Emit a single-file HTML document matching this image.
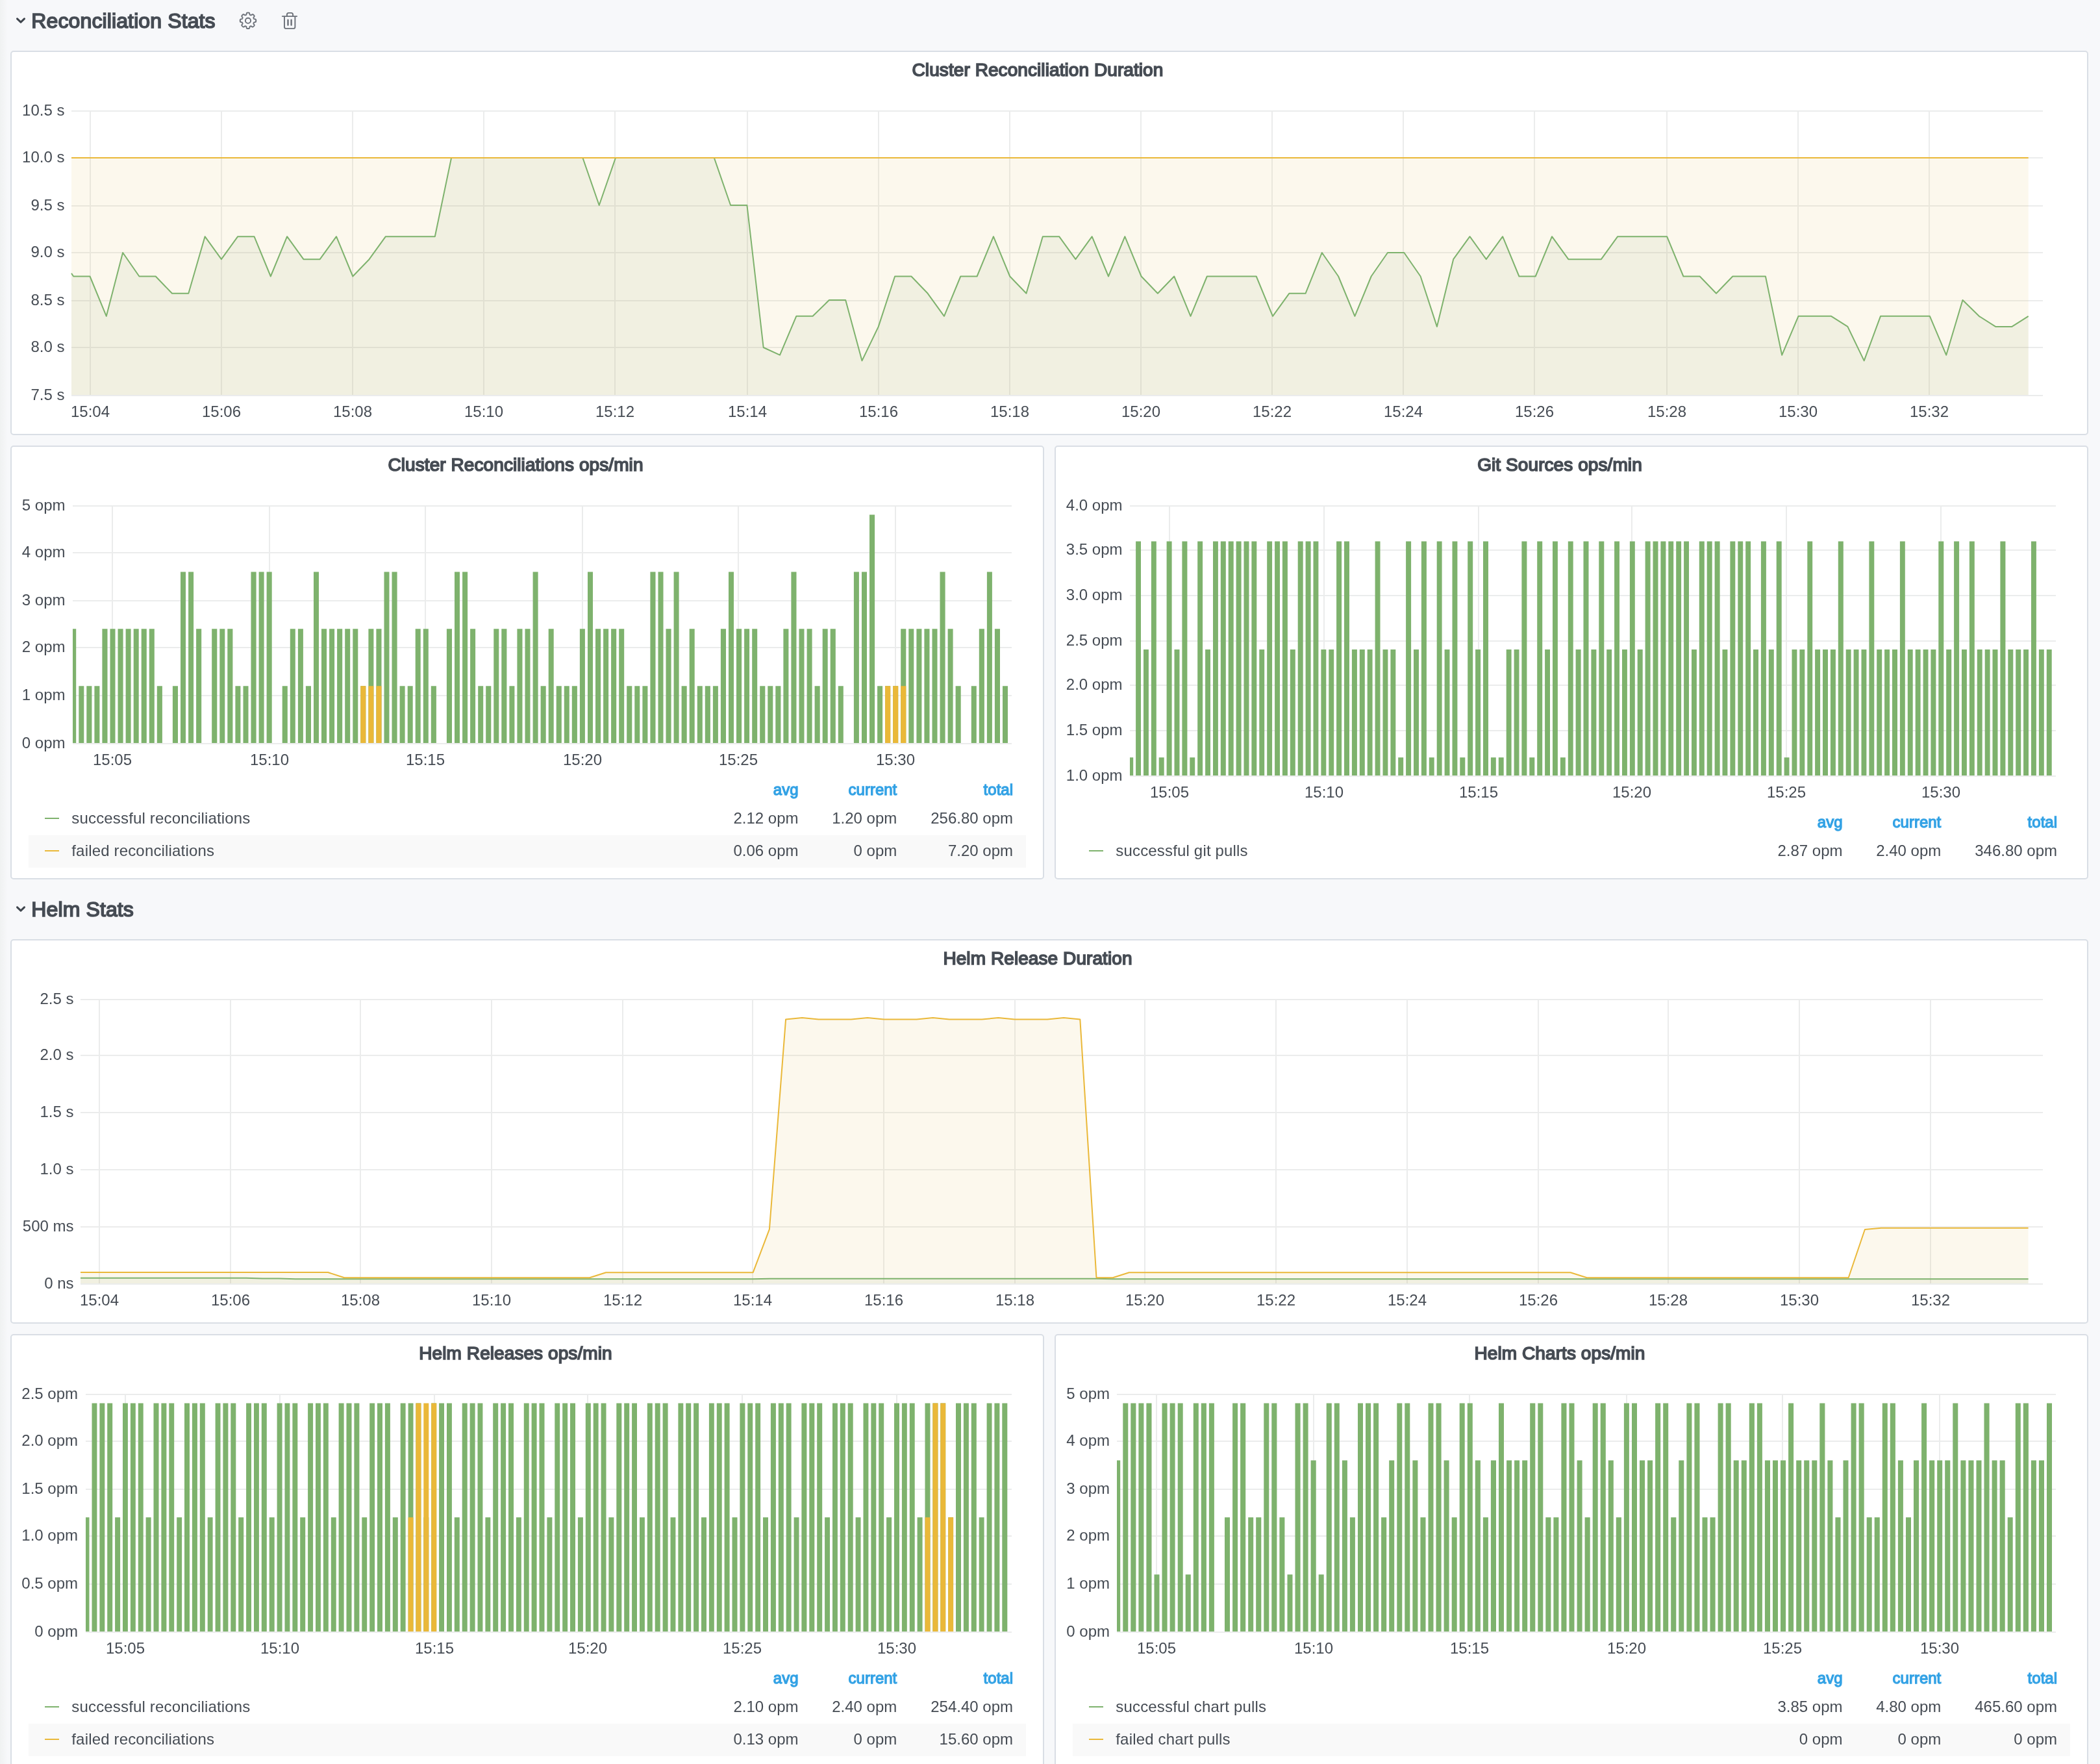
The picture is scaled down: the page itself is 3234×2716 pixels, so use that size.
<!DOCTYPE html>
<html lang="en"><head><meta charset="utf-8"><title>Flux dashboard</title>
<style>
html,body{margin:0;padding:0}
body{width:3234px;height:2716px;overflow:hidden;position:relative;background:#f7f8fa;font-family:"Liberation Sans",sans-serif;color:#464c54}
.edge{position:absolute;left:0;top:0;width:12px;height:2716px;background:linear-gradient(90deg,rgba(110,120,90,.05),rgba(120,130,90,0))}
.panel{position:absolute;box-sizing:border-box;background:#fff;border:2px solid #d9dee5;border-radius:5px}
.rowt{position:absolute;left:48.3px;font-size:32px;font-weight:normal;letter-spacing:.12px;-webkit-text-stroke:1.7px #464c54;line-height:40px;white-space:nowrap;color:#464c54}
.ptitle{position:absolute;font-size:28px;font-weight:normal;letter-spacing:.08px;-webkit-text-stroke:1.7px #464c54;line-height:36px;white-space:nowrap;text-align:center;color:#464c54}
svg.g{position:absolute;left:0;top:0}
svg.g text{font-family:"Liberation Sans",sans-serif;font-size:24px;fill:#464c54}
.lg{position:absolute;font-size:24px;line-height:48.8px;height:50px;white-space:nowrap}
.lg .lb{letter-spacing:.17px}
.lg.stripe{background:#f9f9f9}
.lg span{position:absolute;top:0;white-space:nowrap}
.lg .ic{height:2px;width:21.5px;top:23.6px}
.lh{position:absolute;font-size:24px;font-weight:normal;-webkit-text-stroke:1.3px #33a2e5;color:#33a2e5;line-height:50px;height:50px}
.lh span{position:absolute;top:0;white-space:nowrap}
.ico{position:absolute}
</style></head><body>
<div class="edge"></div>
<div id="root" style="position:absolute;left:0;top:0;width:3234px;height:2716px;will-change:transform">

<svg class="ico" style="left:20px;top:19.1px" width="24" height="24" viewBox="0 0 24 24"><path d="M6.5 9.9L12 15.2L17.5 9.9" fill="none" stroke="#3f454d" stroke-width="3" stroke-linecap="round" stroke-linejoin="round"/></svg>
<div class="rowt" style="top:12.3px">Reconciliation Stats</div>
<svg class="ico" style="left:20px;top:1387.1px" width="24" height="24" viewBox="0 0 24 24"><path d="M6.5 9.9L12 15.2L17.5 9.9" fill="none" stroke="#3f454d" stroke-width="3" stroke-linecap="round" stroke-linejoin="round"/></svg>
<div class="rowt" style="top:1380.3px">Helm Stats</div>
<div class="panel" style="left:16px;top:78px;width:3200px;height:592px"></div>
<div class="ptitle" style="left:1198.0px;width:800px;top:89.9px">Cluster Reconciliation Duration</div>
<div class="panel" style="left:16px;top:686px;width:1592px;height:668px"></div>
<div class="ptitle" style="left:394.0px;width:800px;top:697.9000000000001px">Cluster Reconciliations ops/min</div>
<div class="panel" style="left:1624px;top:686px;width:1592px;height:668px"></div>
<div class="ptitle" style="left:2002.0px;width:800px;top:697.9000000000001px">Git Sources ops/min</div>
<div class="panel" style="left:16px;top:1446px;width:3200px;height:592px"></div>
<div class="ptitle" style="left:1198.0px;width:800px;top:1457.9px">Helm Release Duration</div>
<div class="panel" style="left:16px;top:2054px;width:1592px;height:668px"></div>
<div class="ptitle" style="left:394.0px;width:800px;top:2065.8999999999996px">Helm Releases ops/min</div>
<div class="panel" style="left:1624px;top:2054px;width:1592px;height:668px"></div>
<div class="ptitle" style="left:2002.0px;width:800px;top:2065.8999999999996px">Helm Charts ops/min</div>
<svg class="g" width="3234" height="2716" viewBox="0 0 3234 2716">
<path d="M110 171H3146M110 243H3146M110 317H3146M110 389H3146M110 463H3146M110 535H3146M110 609H3146M139 170V610M341 170V610M543 170V610M745 170V610M947 170V610M1151 170V610M1353 170V610M1555 170V610M1757 170V610M1959 170V610M2161 170V610M2363 170V610M2567 170V610M2769 170V610M2971 170V610" stroke="#ebecec" stroke-width="2" fill="none"/>
<path d="M110 420.9L113.2 425.5L138.5 425.5L163.8 486.8L189.1 389L214.4 425.5L239.7 425.5L265 451.8L290.3 451.8L315.6 364.2L340.9 399.2L366.2 364.2L391.5 364.2L416.8 425.5L442.1 364.2L467.4 399.2L492.7 399.2L518 364.2L543.3 425.5L568.6 399.2L593.9 364.2L619.2 364.2L644.5 364.2L669.8 364.2L695.1 243L720.4 243L745.6 243L770.9 243L796.2 243L821.5 243L846.8 243L872.1 243L897.4 243L922.7 316L948 243L973.3 243L998.6 243L1023.9 243L1049.2 243L1074.5 243L1099.8 243L1125.1 316L1150.4 316L1175.7 535L1201 546.7L1226.3 486.8L1251.6 486.8L1276.9 462L1302.2 462L1327.5 555.4L1352.8 502.9L1378.1 425.5L1403.4 425.5L1428.7 451.8L1454 486.8L1479.3 425.5L1504.6 425.5L1529.9 364.2L1555.2 425.5L1580.5 451.8L1605.8 364.2L1631.1 364.2L1656.4 399.2L1681.7 364.2L1707 425.5L1732.3 364.2L1757.6 425.5L1782.9 451.8L1808.2 425.5L1833.5 486.8L1858.8 425.5L1884.1 425.5L1909.4 425.5L1934.7 425.5L1960 486.8L1985.3 451.8L2010.5 451.8L2035.8 389L2061.1 425.5L2086.4 486.8L2111.7 425.5L2137 389L2162.3 389L2187.6 425.5L2212.9 502.9L2238.2 399.2L2263.5 364.2L2288.8 399.2L2314.1 364.2L2339.4 425.5L2364.7 425.5L2390 364.2L2415.3 399.2L2440.6 399.2L2465.9 399.2L2491.2 364.2L2516.5 364.2L2541.8 364.2L2567.1 364.2L2592.4 425.5L2617.7 425.5L2643 451.8L2668.3 425.5L2693.6 425.5L2718.9 425.5L2744.2 546.7L2769.5 486.8L2794.8 486.8L2820.1 486.8L2845.4 502.9L2870.7 555.4L2896 486.8L2921.3 486.8L2946.6 486.8L2971.9 486.8L2997.2 546.7L3022.5 462L3047.8 486.8L3073.1 502.9L3098.4 502.9L3123.7 486.8V608H110Z" fill="#8CAA7C" fill-opacity=".1"/>
<path d="M110 243H3123.7V608H110Z" fill="#E1B94B" fill-opacity=".1"/>
<path d="M110 420.9L113.2 425.5L138.5 425.5L163.8 486.8L189.1 389L214.4 425.5L239.7 425.5L265 451.8L290.3 451.8L315.6 364.2L340.9 399.2L366.2 364.2L391.5 364.2L416.8 425.5L442.1 364.2L467.4 399.2L492.7 399.2L518 364.2L543.3 425.5L568.6 399.2L593.9 364.2L619.2 364.2L644.5 364.2L669.8 364.2L695.1 243L720.4 243L745.6 243L770.9 243L796.2 243L821.5 243L846.8 243L872.1 243L897.4 243L922.7 316L948 243L973.3 243L998.6 243L1023.9 243L1049.2 243L1074.5 243L1099.8 243L1125.1 316L1150.4 316L1175.7 535L1201 546.7L1226.3 486.8L1251.6 486.8L1276.9 462L1302.2 462L1327.5 555.4L1352.8 502.9L1378.1 425.5L1403.4 425.5L1428.7 451.8L1454 486.8L1479.3 425.5L1504.6 425.5L1529.9 364.2L1555.2 425.5L1580.5 451.8L1605.8 364.2L1631.1 364.2L1656.4 399.2L1681.7 364.2L1707 425.5L1732.3 364.2L1757.6 425.5L1782.9 451.8L1808.2 425.5L1833.5 486.8L1858.8 425.5L1884.1 425.5L1909.4 425.5L1934.7 425.5L1960 486.8L1985.3 451.8L2010.5 451.8L2035.8 389L2061.1 425.5L2086.4 486.8L2111.7 425.5L2137 389L2162.3 389L2187.6 425.5L2212.9 502.9L2238.2 399.2L2263.5 364.2L2288.8 399.2L2314.1 364.2L2339.4 425.5L2364.7 425.5L2390 364.2L2415.3 399.2L2440.6 399.2L2465.9 399.2L2491.2 364.2L2516.5 364.2L2541.8 364.2L2567.1 364.2L2592.4 425.5L2617.7 425.5L2643 451.8L2668.3 425.5L2693.6 425.5L2718.9 425.5L2744.2 546.7L2769.5 486.8L2794.8 486.8L2820.1 486.8L2845.4 502.9L2870.7 555.4L2896 486.8L2921.3 486.8L2946.6 486.8L2971.9 486.8L2997.2 546.7L3022.5 462L3047.8 486.8L3073.1 502.9L3098.4 502.9L3123.7 486.8" stroke="#7EB26D" stroke-width="2" fill="none" stroke-linejoin="round"/>
<path d="M110 243H3123.7" stroke="#EAB839" stroke-width="2" fill="none"/>
<text x="99.5" y="178.2" text-anchor="end">10.5 s</text>
<text x="99.5" y="250.2" text-anchor="end">10.0 s</text>
<text x="99.5" y="324.2" text-anchor="end">9.5 s</text>
<text x="99.5" y="396.2" text-anchor="end">9.0 s</text>
<text x="99.5" y="470.2" text-anchor="end">8.5 s</text>
<text x="99.5" y="542.2" text-anchor="end">8.0 s</text>
<text x="99.5" y="616.2" text-anchor="end">7.5 s</text>
<text x="139" y="642.4" text-anchor="middle">15:04</text>
<text x="341" y="642.4" text-anchor="middle">15:06</text>
<text x="543" y="642.4" text-anchor="middle">15:08</text>
<text x="745" y="642.4" text-anchor="middle">15:10</text>
<text x="947" y="642.4" text-anchor="middle">15:12</text>
<text x="1151" y="642.4" text-anchor="middle">15:14</text>
<text x="1353" y="642.4" text-anchor="middle">15:16</text>
<text x="1555" y="642.4" text-anchor="middle">15:18</text>
<text x="1757" y="642.4" text-anchor="middle">15:20</text>
<text x="1959" y="642.4" text-anchor="middle">15:22</text>
<text x="2161" y="642.4" text-anchor="middle">15:24</text>
<text x="2363" y="642.4" text-anchor="middle">15:26</text>
<text x="2567" y="642.4" text-anchor="middle">15:28</text>
<text x="2769" y="642.4" text-anchor="middle">15:30</text>
<text x="2971" y="642.4" text-anchor="middle">15:32</text>
<path d="M112 779H1558M112 851H1558M112 925H1558M112 997H1558M112 1071H1558M112 1145H1558M173 778V1146M415 778V1146M655 778V1146M897 778V1146M1137 778V1146M1379 778V1146" stroke="#ebecec" stroke-width="2" fill="none"/>
<path d="M112 1144V968.3H117.2V1144ZM121.3 1144V1056.2H129.3V1144ZM133.3 1144V1056.2H141.4V1144ZM145.4 1144V1056.2H153.4V1144ZM157.4 1144V968.3H165.5V1144ZM169.5 1144V968.3H177.5V1144ZM181.5 1144V968.3H189.6V1144ZM193.6 1144V968.3H201.6V1144ZM205.7 1144V968.3H213.7V1144ZM217.7 1144V968.3H225.8V1144ZM229.8 1144V968.3H237.8V1144ZM241.8 1144V1056.2H249.9V1144ZM265.9 1144V1056.2H274V1144ZM278 1144V880.5H286V1144ZM290.1 1144V880.5H298.1V1144ZM302.1 1144V968.3H310.2V1144ZM326.2 1144V968.3H334.3V1144ZM338.3 1144V968.3H346.3V1144ZM350.3 1144V968.3H358.4V1144ZM362.4 1144V1056.2H370.4V1144ZM374.5 1144V1056.2H382.5V1144ZM386.5 1144V880.5H394.6V1144ZM398.6 1144V880.5H406.6V1144ZM410.6 1144V880.5H418.7V1144ZM434.7 1144V1056.2H442.8V1144ZM446.8 1144V968.3H454.8V1144ZM458.9 1144V968.3H466.9V1144ZM470.9 1144V1056.2H479V1144ZM483 1144V880.5H491V1144ZM495 1144V968.3H503.1V1144ZM507.1 1144V968.3H515.1V1144ZM519.1 1144V968.3H527.2V1144ZM531.2 1144V968.3H539.2V1144ZM543.3 1144V968.3H551.3V1144ZM555.3 1144V1056.2H563.3V1144ZM567.4 1144V968.3H575.4V1144ZM579.4 1144V968.3H587.5V1144ZM591.5 1144V880.5H599.5V1144ZM603.5 1144V880.5H611.6V1144ZM615.6 1144V1056.2H623.6V1144ZM627.7 1144V1056.2H635.7V1144ZM639.7 1144V968.3H647.7V1144ZM651.8 1144V968.3H659.8V1144ZM663.8 1144V1056.2H671.9V1144ZM687.9 1144V968.3H696V1144ZM700 1144V880.5H708V1144ZM712.1 1144V880.5H720.1V1144ZM724.1 1144V968.3H732.1V1144ZM736.2 1144V1056.2H744.2V1144ZM748.2 1144V1056.2H756.3V1144ZM760.3 1144V968.3H768.3V1144ZM772.3 1144V968.3H780.4V1144ZM784.4 1144V1056.2H792.4V1144ZM796.4 1144V968.3H804.5V1144ZM808.5 1144V968.3H816.5V1144ZM820.6 1144V880.5H828.6V1144ZM832.6 1144V1056.2H840.7V1144ZM844.7 1144V968.3H852.7V1144ZM856.7 1144V1056.2H864.8V1144ZM868.8 1144V1056.2H876.8V1144ZM880.8 1144V1056.2H888.9V1144ZM892.9 1144V968.3H900.9V1144ZM905 1144V880.5H913V1144ZM917 1144V968.3H925.1V1144ZM929.1 1144V968.3H937.1V1144ZM941.1 1144V968.3H949.2V1144ZM953.2 1144V968.3H961.2V1144ZM965.2 1144V1056.2H973.3V1144ZM977.3 1144V1056.2H985.3V1144ZM989.4 1144V1056.2H997.4V1144ZM1001.4 1144V880.5H1009.5V1144ZM1013.5 1144V880.5H1021.5V1144ZM1025.5 1144V968.3H1033.6V1144ZM1037.6 1144V880.5H1045.6V1144ZM1049.6 1144V1056.2H1057.7V1144ZM1061.7 1144V968.3H1069.7V1144ZM1073.8 1144V1056.2H1081.8V1144ZM1085.8 1144V1056.2H1093.9V1144ZM1097.9 1144V1056.2H1105.9V1144ZM1109.9 1144V968.3H1118V1144ZM1122 1144V880.5H1130V1144ZM1134 1144V968.3H1142.1V1144ZM1146.1 1144V968.3H1154.1V1144ZM1158.2 1144V968.3H1166.2V1144ZM1170.2 1144V1056.2H1178.3V1144ZM1182.3 1144V1056.2H1190.3V1144ZM1194.3 1144V1056.2H1202.4V1144ZM1206.4 1144V968.3H1214.4V1144ZM1218.4 1144V880.5H1226.5V1144ZM1230.5 1144V968.3H1238.5V1144ZM1242.6 1144V968.3H1250.6V1144ZM1254.6 1144V1056.2H1262.7V1144ZM1266.7 1144V968.3H1274.7V1144ZM1278.7 1144V968.3H1286.8V1144ZM1290.8 1144V1056.2H1298.8V1144ZM1314.9 1144V880.5H1322.9V1144ZM1327 1144V880.5H1335V1144ZM1339 1144V792.6H1347.1V1144ZM1351.1 1144V1056.2H1359.1V1144ZM1363.1 1144V1056.2H1371.2V1144ZM1375.2 1144V1056.2H1383.2V1144ZM1387.2 1144V968.3H1395.3V1144ZM1399.3 1144V968.3H1407.3V1144ZM1411.4 1144V968.3H1419.4V1144ZM1423.4 1144V968.3H1431.5V1144ZM1435.5 1144V968.3H1443.5V1144ZM1447.5 1144V880.5H1455.6V1144ZM1459.6 1144V968.3H1467.6V1144ZM1471.6 1144V1056.2H1479.7V1144ZM1495.8 1144V1056.2H1503.8V1144ZM1507.8 1144V968.3H1515.9V1144ZM1519.9 1144V880.5H1527.9V1144ZM1531.9 1144V968.3H1540V1144ZM1544 1144V1056.2H1552V1144Z" fill="#7EB26D"/>
<path d="M555.3 1144V1056.2H563.3V1144ZM567.4 1144V1056.2H575.4V1144ZM579.4 1144V1056.2H587.5V1144ZM1363.1 1144V1056.2H1371.2V1144ZM1375.2 1144V1056.2H1383.2V1144ZM1387.2 1144V1056.2H1395.3V1144Z" fill="#EAB839"/>
<text x="100.5" y="786.2" text-anchor="end">5 opm</text>
<text x="100.5" y="858.2" text-anchor="end">4 opm</text>
<text x="100.5" y="932.2" text-anchor="end">3 opm</text>
<text x="100.5" y="1004.2" text-anchor="end">2 opm</text>
<text x="100.5" y="1078.2" text-anchor="end">1 opm</text>
<text x="100.5" y="1152.2" text-anchor="end">0 opm</text>
<text x="173" y="1178.3" text-anchor="middle">15:05</text>
<text x="415" y="1178.3" text-anchor="middle">15:10</text>
<text x="655" y="1178.3" text-anchor="middle">15:15</text>
<text x="897" y="1178.3" text-anchor="middle">15:20</text>
<text x="1137" y="1178.3" text-anchor="middle">15:25</text>
<text x="1379" y="1178.3" text-anchor="middle">15:30</text>
<path d="M1740 779H3166M1740 847H3166M1740 917H3166M1740 987H3166M1740 1055H3166M1740 1125H3166M1740 1195H3166M1801 778V1196M2039 778V1196M2277 778V1196M2513 778V1196M2751 778V1196M2989 778V1196" stroke="#ebecec" stroke-width="2" fill="none"/>
<path d="M1740 1194V1166.3H1745.2V1194ZM1749.1 1194V833.5H1757V1194ZM1761 1194V999.9H1768.9V1194ZM1772.9 1194V833.5H1780.8V1194ZM1784.7 1194V1166.3H1792.7V1194ZM1796.6 1194V833.5H1804.6V1194ZM1808.5 1194V999.9H1816.5V1194ZM1820.4 1194V833.5H1828.4V1194ZM1832.3 1194V1166.3H1840.2V1194ZM1844.2 1194V833.5H1852.1V1194ZM1856.1 1194V999.9H1864V1194ZM1868 1194V833.5H1875.9V1194ZM1879.8 1194V833.5H1887.8V1194ZM1891.7 1194V833.5H1899.7V1194ZM1903.6 1194V833.5H1911.6V1194ZM1915.5 1194V833.5H1923.5V1194ZM1927.4 1194V833.5H1935.3V1194ZM1939.3 1194V999.9H1947.2V1194ZM1951.2 1194V833.5H1959.1V1194ZM1963.1 1194V833.5H1971V1194ZM1974.9 1194V833.5H1982.9V1194ZM1986.8 1194V999.9H1994.8V1194ZM1998.7 1194V833.5H2006.7V1194ZM2010.6 1194V833.5H2018.6V1194ZM2022.5 1194V833.5H2030.4V1194ZM2034.4 1194V999.9H2042.3V1194ZM2046.3 1194V999.9H2054.2V1194ZM2058.1 1194V833.5H2066.1V1194ZM2070 1194V833.5H2078V1194ZM2081.9 1194V999.9H2089.9V1194ZM2093.8 1194V999.9H2101.8V1194ZM2105.7 1194V999.9H2113.6V1194ZM2117.6 1194V833.5H2125.5V1194ZM2129.5 1194V999.9H2137.4V1194ZM2141.4 1194V999.9H2149.3V1194ZM2153.2 1194V1166.3H2161.2V1194ZM2165.1 1194V833.5H2173.1V1194ZM2177 1194V999.9H2185V1194ZM2188.9 1194V833.5H2196.9V1194ZM2200.8 1194V1166.3H2208.7V1194ZM2212.7 1194V833.5H2220.6V1194ZM2224.6 1194V999.9H2232.5V1194ZM2236.5 1194V833.5H2244.4V1194ZM2248.3 1194V1166.3H2256.3V1194ZM2260.2 1194V833.5H2268.2V1194ZM2272.1 1194V999.9H2280.1V1194ZM2284 1194V833.5H2292V1194ZM2295.9 1194V1166.3H2303.8V1194ZM2307.8 1194V1166.3H2315.7V1194ZM2319.7 1194V999.9H2327.6V1194ZM2331.6 1194V999.9H2339.5V1194ZM2343.4 1194V833.5H2351.4V1194ZM2355.3 1194V1166.3H2363.3V1194ZM2367.2 1194V833.5H2375.2V1194ZM2379.1 1194V999.9H2387V1194ZM2391 1194V833.5H2398.9V1194ZM2402.9 1194V1166.3H2410.8V1194ZM2414.8 1194V833.5H2422.7V1194ZM2426.6 1194V999.9H2434.6V1194ZM2438.5 1194V833.5H2446.5V1194ZM2450.4 1194V999.9H2458.4V1194ZM2462.3 1194V833.5H2470.3V1194ZM2474.2 1194V999.9H2482.1V1194ZM2486.1 1194V833.5H2494V1194ZM2498 1194V999.9H2505.9V1194ZM2509.9 1194V833.5H2517.8V1194ZM2521.7 1194V999.9H2529.7V1194ZM2533.6 1194V833.5H2541.6V1194ZM2545.5 1194V833.5H2553.5V1194ZM2557.4 1194V833.5H2565.4V1194ZM2569.3 1194V833.5H2577.2V1194ZM2581.2 1194V833.5H2589.1V1194ZM2593.1 1194V833.5H2601V1194ZM2605 1194V999.9H2612.9V1194ZM2616.8 1194V833.5H2624.8V1194ZM2628.7 1194V833.5H2636.7V1194ZM2640.6 1194V833.5H2648.6V1194ZM2652.5 1194V999.9H2660.4V1194ZM2664.4 1194V833.5H2672.3V1194ZM2676.3 1194V833.5H2684.2V1194ZM2688.2 1194V833.5H2696.1V1194ZM2700 1194V999.9H2708V1194ZM2711.9 1194V833.5H2719.9V1194ZM2723.8 1194V999.9H2731.8V1194ZM2735.7 1194V833.5H2743.7V1194ZM2747.6 1194V1166.3H2755.5V1194ZM2759.5 1194V999.9H2767.4V1194ZM2771.4 1194V999.9H2779.3V1194ZM2783.3 1194V833.5H2791.2V1194ZM2795.1 1194V999.9H2803.1V1194ZM2807 1194V999.9H2815V1194ZM2818.9 1194V999.9H2826.9V1194ZM2830.8 1194V833.5H2838.8V1194ZM2842.7 1194V999.9H2850.6V1194ZM2854.6 1194V999.9H2862.5V1194ZM2866.5 1194V999.9H2874.4V1194ZM2878.4 1194V833.5H2886.3V1194ZM2890.2 1194V999.9H2898.2V1194ZM2902.1 1194V999.9H2910.1V1194ZM2914 1194V999.9H2922V1194ZM2925.9 1194V833.5H2933.8V1194ZM2937.8 1194V999.9H2945.7V1194ZM2949.7 1194V999.9H2957.6V1194ZM2961.6 1194V999.9H2969.5V1194ZM2973.4 1194V999.9H2981.4V1194ZM2985.3 1194V833.5H2993.3V1194ZM2997.2 1194V999.9H3005.2V1194ZM3009.1 1194V833.5H3017.1V1194ZM3021 1194V999.9H3028.9V1194ZM3032.9 1194V833.5H3040.8V1194ZM3044.8 1194V999.9H3052.7V1194ZM3056.7 1194V999.9H3064.6V1194ZM3068.5 1194V999.9H3076.5V1194ZM3080.4 1194V833.5H3088.4V1194ZM3092.3 1194V999.9H3100.3V1194ZM3104.2 1194V999.9H3112.2V1194ZM3116.1 1194V999.9H3124V1194ZM3128 1194V833.5H3135.9V1194ZM3139.9 1194V999.9H3147.8V1194ZM3151.8 1194V999.9H3159.7V1194Z" fill="#7EB26D"/>
<text x="1728.5" y="786.2" text-anchor="end">4.0 opm</text>
<text x="1728.5" y="854.2" text-anchor="end">3.5 opm</text>
<text x="1728.5" y="924.2" text-anchor="end">3.0 opm</text>
<text x="1728.5" y="994.2" text-anchor="end">2.5 opm</text>
<text x="1728.5" y="1062.2" text-anchor="end">2.0 opm</text>
<text x="1728.5" y="1132.2" text-anchor="end">1.5 opm</text>
<text x="1728.5" y="1202.2" text-anchor="end">1.0 opm</text>
<text x="1801" y="1228.2" text-anchor="middle">15:05</text>
<text x="2039" y="1228.2" text-anchor="middle">15:10</text>
<text x="2277" y="1228.2" text-anchor="middle">15:15</text>
<text x="2513" y="1228.2" text-anchor="middle">15:20</text>
<text x="2751" y="1228.2" text-anchor="middle">15:25</text>
<text x="2989" y="1228.2" text-anchor="middle">15:30</text>
<path d="M124 1539H3146M124 1625H3146M124 1713H3146M124 1801H3146M124 1889H3146M124 1977H3146M153 1538V1978M355 1538V1978M555 1538V1978M757 1538V1978M959 1538V1978M1159 1538V1978M1361 1538V1978M1563 1538V1978M1763 1538V1978M1965 1538V1978M2167 1538V1978M2369 1538V1978M2569 1538V1978M2771 1538V1978M2973 1538V1978" stroke="#ebecec" stroke-width="2" fill="none"/>
<path d="M124 1967.8L127.5 1967.8L152.6 1967.8L177.8 1967.8L203 1967.8L228.2 1967.8L253.3 1967.8L278.5 1967.8L303.7 1967.8L328.9 1967.8L354.1 1967.8L379.2 1967.8L404.4 1968.6L429.6 1968.6L454.8 1969.3L479.9 1969.3L505.1 1969.3L530.3 1969.3L555.5 1969.3L580.7 1969.3L605.8 1969.3L631 1969.3L656.2 1969.3L681.4 1969.3L706.5 1969.3L731.7 1969.3L756.9 1969.3L782.1 1969.3L807.3 1969.3L832.4 1969.3L857.6 1969.3L882.8 1969.3L908 1969.3L933.1 1969.3L958.3 1969.3L983.5 1969.3L1008.7 1969.3L1033.9 1969.3L1059 1969.3L1084.2 1969.3L1109.4 1969.3L1134.6 1969.3L1159.7 1969.3L1184.9 1968.8L1210.1 1968.8L1235.3 1968.8L1260.5 1968.8L1285.6 1968.8L1310.8 1968.8L1336 1968.8L1361.2 1968.8L1386.4 1968.8L1411.5 1968.8L1436.7 1968.8L1461.9 1968.8L1487.1 1968.8L1512.2 1968.8L1537.4 1968.8L1562.6 1968.8L1587.8 1968.8L1613 1968.8L1638.1 1968.8L1663.3 1968.8L1688.5 1968.8L1713.7 1969.3L1738.8 1969.3L1764 1969.3L1789.2 1969.3L1814.4 1969.3L1839.6 1969.3L1864.7 1969.3L1889.9 1969.3L1915.1 1969.3L1940.3 1969.3L1965.4 1969.3L1990.6 1969.3L2015.8 1969.3L2041 1969.3L2066.2 1969.3L2091.3 1969.3L2116.5 1969.3L2141.7 1969.3L2166.9 1969.3L2192 1969.3L2217.2 1969.3L2242.4 1969.3L2267.6 1969.3L2292.8 1969.3L2317.9 1969.3L2343.1 1969.3L2368.3 1969.3L2393.5 1969.3L2418.6 1969.3L2443.8 1969.3L2469 1969.3L2494.2 1969.3L2519.4 1969.3L2544.5 1969.3L2569.7 1969.3L2594.9 1969.3L2620.1 1969.3L2645.2 1969.3L2670.4 1969.3L2695.6 1969.3L2720.8 1969.3L2746 1969.3L2771.1 1969.3L2796.3 1969.3L2821.5 1969.3L2846.7 1969.3L2871.9 1969.3L2897 1969.3L2922.2 1969.3L2947.4 1969.3L2972.6 1969.3L2997.7 1969.3L3022.9 1969.3L3048.1 1969.3L3073.3 1969.3L3098.5 1969.3L3123.6 1969.3V1976H124Z" fill="#8CAA7C" fill-opacity=".1"/>
<path d="M124 1959L127.5 1959L152.6 1959L177.8 1959L203 1959L228.2 1959L253.3 1959L278.5 1959L303.7 1959L328.9 1959L354.1 1959L379.2 1959L404.4 1959L429.6 1959L454.8 1959L479.9 1959L505.1 1959L530.3 1967.2L555.5 1967.2L580.7 1967.2L605.8 1967.2L631 1967.2L656.2 1967.2L681.4 1967.2L706.5 1967.2L731.7 1967.2L756.9 1967.2L782.1 1967.2L807.3 1967.2L832.4 1967.2L857.6 1967.2L882.8 1967.2L908 1967.2L933.1 1959.2L958.3 1959.2L983.5 1959.2L1008.7 1959.2L1033.9 1959.2L1059 1959.2L1084.2 1959.2L1109.4 1959.2L1134.6 1959.2L1159.7 1959.2L1184.9 1892.7L1210.1 1569.4L1235.3 1567.1L1260.5 1569.4L1285.6 1569.4L1310.8 1569.4L1336 1567.1L1361.2 1569.4L1386.4 1569.4L1411.5 1569.4L1436.7 1567.1L1461.9 1569.4L1487.1 1569.4L1512.2 1569.4L1537.4 1567.1L1562.6 1569.4L1587.8 1569.4L1613 1569.4L1638.1 1567.1L1663.3 1569.4L1688.5 1967.2L1713.7 1967.2L1738.8 1959.2L1764 1959.2L1789.2 1959.2L1814.4 1959.2L1839.6 1959.2L1864.7 1959.2L1889.9 1959.2L1915.1 1959.2L1940.3 1959.2L1965.4 1959.2L1990.6 1959.2L2015.8 1959.2L2041 1959.2L2066.2 1959.2L2091.3 1959.2L2116.5 1959.2L2141.7 1959.2L2166.9 1959.2L2192 1959.2L2217.2 1959.2L2242.4 1959.2L2267.6 1959.2L2292.8 1959.2L2317.9 1959.2L2343.1 1959.2L2368.3 1959.2L2393.5 1959.2L2418.6 1959.2L2443.8 1967.2L2469 1967.2L2494.2 1967.2L2519.4 1967.2L2544.5 1967.2L2569.7 1967.2L2594.9 1967.2L2620.1 1967.2L2645.2 1967.2L2670.4 1967.2L2695.6 1967.2L2720.8 1967.2L2746 1967.2L2771.1 1967.2L2796.3 1967.2L2821.5 1967.2L2846.7 1967.2L2871.9 1893L2897 1890.7L2922.2 1890.7L2947.4 1890.7L2972.6 1890.7L2997.7 1890.7L3022.9 1890.7L3048.1 1890.7L3073.3 1890.7L3098.5 1890.7L3123.6 1890.7V1976H124Z" fill="#E1B94B" fill-opacity=".1"/>
<path d="M124 1967.8L127.5 1967.8L152.6 1967.8L177.8 1967.8L203 1967.8L228.2 1967.8L253.3 1967.8L278.5 1967.8L303.7 1967.8L328.9 1967.8L354.1 1967.8L379.2 1967.8L404.4 1968.6L429.6 1968.6L454.8 1969.3L479.9 1969.3L505.1 1969.3L530.3 1969.3L555.5 1969.3L580.7 1969.3L605.8 1969.3L631 1969.3L656.2 1969.3L681.4 1969.3L706.5 1969.3L731.7 1969.3L756.9 1969.3L782.1 1969.3L807.3 1969.3L832.4 1969.3L857.6 1969.3L882.8 1969.3L908 1969.3L933.1 1969.3L958.3 1969.3L983.5 1969.3L1008.7 1969.3L1033.9 1969.3L1059 1969.3L1084.2 1969.3L1109.4 1969.3L1134.6 1969.3L1159.7 1969.3L1184.9 1968.8L1210.1 1968.8L1235.3 1968.8L1260.5 1968.8L1285.6 1968.8L1310.8 1968.8L1336 1968.8L1361.2 1968.8L1386.4 1968.8L1411.5 1968.8L1436.7 1968.8L1461.9 1968.8L1487.1 1968.8L1512.2 1968.8L1537.4 1968.8L1562.6 1968.8L1587.8 1968.8L1613 1968.8L1638.1 1968.8L1663.3 1968.8L1688.5 1968.8L1713.7 1969.3L1738.8 1969.3L1764 1969.3L1789.2 1969.3L1814.4 1969.3L1839.6 1969.3L1864.7 1969.3L1889.9 1969.3L1915.1 1969.3L1940.3 1969.3L1965.4 1969.3L1990.6 1969.3L2015.8 1969.3L2041 1969.3L2066.2 1969.3L2091.3 1969.3L2116.5 1969.3L2141.7 1969.3L2166.9 1969.3L2192 1969.3L2217.2 1969.3L2242.4 1969.3L2267.6 1969.3L2292.8 1969.3L2317.9 1969.3L2343.1 1969.3L2368.3 1969.3L2393.5 1969.3L2418.6 1969.3L2443.8 1969.3L2469 1969.3L2494.2 1969.3L2519.4 1969.3L2544.5 1969.3L2569.7 1969.3L2594.9 1969.3L2620.1 1969.3L2645.2 1969.3L2670.4 1969.3L2695.6 1969.3L2720.8 1969.3L2746 1969.3L2771.1 1969.3L2796.3 1969.3L2821.5 1969.3L2846.7 1969.3L2871.9 1969.3L2897 1969.3L2922.2 1969.3L2947.4 1969.3L2972.6 1969.3L2997.7 1969.3L3022.9 1969.3L3048.1 1969.3L3073.3 1969.3L3098.5 1969.3L3123.6 1969.3" stroke="#7EB26D" stroke-width="2" fill="none" stroke-linejoin="round"/>
<path d="M124 1959L127.5 1959L152.6 1959L177.8 1959L203 1959L228.2 1959L253.3 1959L278.5 1959L303.7 1959L328.9 1959L354.1 1959L379.2 1959L404.4 1959L429.6 1959L454.8 1959L479.9 1959L505.1 1959L530.3 1967.2L555.5 1967.2L580.7 1967.2L605.8 1967.2L631 1967.2L656.2 1967.2L681.4 1967.2L706.5 1967.2L731.7 1967.2L756.9 1967.2L782.1 1967.2L807.3 1967.2L832.4 1967.2L857.6 1967.2L882.8 1967.2L908 1967.2L933.1 1959.2L958.3 1959.2L983.5 1959.2L1008.7 1959.2L1033.9 1959.2L1059 1959.2L1084.2 1959.2L1109.4 1959.2L1134.6 1959.2L1159.7 1959.2L1184.9 1892.7L1210.1 1569.4L1235.3 1567.1L1260.5 1569.4L1285.6 1569.4L1310.8 1569.4L1336 1567.1L1361.2 1569.4L1386.4 1569.4L1411.5 1569.4L1436.7 1567.1L1461.9 1569.4L1487.1 1569.4L1512.2 1569.4L1537.4 1567.1L1562.6 1569.4L1587.8 1569.4L1613 1569.4L1638.1 1567.1L1663.3 1569.4L1688.5 1967.2L1713.7 1967.2L1738.8 1959.2L1764 1959.2L1789.2 1959.2L1814.4 1959.2L1839.6 1959.2L1864.7 1959.2L1889.9 1959.2L1915.1 1959.2L1940.3 1959.2L1965.4 1959.2L1990.6 1959.2L2015.8 1959.2L2041 1959.2L2066.2 1959.2L2091.3 1959.2L2116.5 1959.2L2141.7 1959.2L2166.9 1959.2L2192 1959.2L2217.2 1959.2L2242.4 1959.2L2267.6 1959.2L2292.8 1959.2L2317.9 1959.2L2343.1 1959.2L2368.3 1959.2L2393.5 1959.2L2418.6 1959.2L2443.8 1967.2L2469 1967.2L2494.2 1967.2L2519.4 1967.2L2544.5 1967.2L2569.7 1967.2L2594.9 1967.2L2620.1 1967.2L2645.2 1967.2L2670.4 1967.2L2695.6 1967.2L2720.8 1967.2L2746 1967.2L2771.1 1967.2L2796.3 1967.2L2821.5 1967.2L2846.7 1967.2L2871.9 1893L2897 1890.7L2922.2 1890.7L2947.4 1890.7L2972.6 1890.7L2997.7 1890.7L3022.9 1890.7L3048.1 1890.7L3073.3 1890.7L3098.5 1890.7L3123.6 1890.7" stroke="#EAB839" stroke-width="2" fill="none" stroke-linejoin="round"/>
<text x="113.5" y="1546.2" text-anchor="end">2.5 s</text>
<text x="113.5" y="1632.2" text-anchor="end">2.0 s</text>
<text x="113.5" y="1720.2" text-anchor="end">1.5 s</text>
<text x="113.5" y="1808.2" text-anchor="end">1.0 s</text>
<text x="113.5" y="1896.2" text-anchor="end">500 ms</text>
<text x="113.5" y="1984.2" text-anchor="end">0 ns</text>
<text x="153" y="2010.4" text-anchor="middle">15:04</text>
<text x="355" y="2010.4" text-anchor="middle">15:06</text>
<text x="555" y="2010.4" text-anchor="middle">15:08</text>
<text x="757" y="2010.4" text-anchor="middle">15:10</text>
<text x="959" y="2010.4" text-anchor="middle">15:12</text>
<text x="1159" y="2010.4" text-anchor="middle">15:14</text>
<text x="1361" y="2010.4" text-anchor="middle">15:16</text>
<text x="1563" y="2010.4" text-anchor="middle">15:18</text>
<text x="1763" y="2010.4" text-anchor="middle">15:20</text>
<text x="1965" y="2010.4" text-anchor="middle">15:22</text>
<text x="2167" y="2010.4" text-anchor="middle">15:24</text>
<text x="2369" y="2010.4" text-anchor="middle">15:26</text>
<text x="2569" y="2010.4" text-anchor="middle">15:28</text>
<text x="2771" y="2010.4" text-anchor="middle">15:30</text>
<text x="2973" y="2010.4" text-anchor="middle">15:32</text>
<path d="M132 2147H1558M132 2219H1558M132 2293H1558M132 2365H1558M132 2439H1558M132 2513H1558M193 2146V2514M431 2146V2514M669 2146V2514M905 2146V2514M1143 2146V2514M1381 2146V2514" stroke="#ebecec" stroke-width="2" fill="none"/>
<path d="M132 2512V2336.3H137.5V2512ZM141.5 2512V2160.6H149.4V2512ZM153.4 2512V2160.6H161.3V2512ZM165.2 2512V2160.6H173.2V2512ZM177.1 2512V2336.3H185.1V2512ZM189 2512V2160.6H196.9V2512ZM200.9 2512V2160.6H208.8V2512ZM212.8 2512V2160.6H220.7V2512ZM224.6 2512V2336.3H232.6V2512ZM236.5 2512V2160.6H244.5V2512ZM248.4 2512V2160.6H256.4V2512ZM260.3 2512V2160.6H268.2V2512ZM272.2 2512V2336.3H280.1V2512ZM284 2512V2160.6H292V2512ZM295.9 2512V2160.6H303.9V2512ZM307.8 2512V2160.6H315.8V2512ZM319.7 2512V2336.3H327.6V2512ZM331.6 2512V2160.6H339.5V2512ZM343.4 2512V2160.6H351.4V2512ZM355.3 2512V2160.6H363.3V2512ZM367.2 2512V2336.3H375.2V2512ZM379.1 2512V2160.6H387V2512ZM391 2512V2160.6H398.9V2512ZM402.8 2512V2160.6H410.8V2512ZM414.7 2512V2336.3H422.7V2512ZM426.6 2512V2160.6H434.6V2512ZM438.5 2512V2160.6H446.4V2512ZM450.4 2512V2160.6H458.3V2512ZM462.2 2512V2336.3H470.2V2512ZM474.1 2512V2160.6H482.1V2512ZM486 2512V2160.6H493.9V2512ZM497.9 2512V2160.6H505.8V2512ZM509.8 2512V2336.3H517.7V2512ZM521.6 2512V2160.6H529.6V2512ZM533.5 2512V2160.6H541.5V2512ZM545.4 2512V2160.6H553.4V2512ZM557.3 2512V2336.3H565.2V2512ZM569.2 2512V2160.6H577.1V2512ZM581 2512V2160.6H589V2512ZM592.9 2512V2160.6H600.9V2512ZM604.8 2512V2336.3H612.8V2512ZM616.7 2512V2160.6H624.6V2512ZM628.6 2512V2160.6H636.5V2512ZM640.4 2512V2160.6H648.4V2512ZM652.3 2512V2336.3H660.3V2512ZM664.2 2512V2160.6H672.2V2512ZM676.1 2512V2160.6H684V2512ZM688 2512V2160.6H695.9V2512ZM699.8 2512V2336.3H707.8V2512ZM711.7 2512V2160.6H719.7V2512ZM723.6 2512V2160.6H731.6V2512ZM735.5 2512V2160.6H743.4V2512ZM747.4 2512V2336.3H755.3V2512ZM759.2 2512V2160.6H767.2V2512ZM771.1 2512V2160.6H779.1V2512ZM783 2512V2160.6H791V2512ZM794.9 2512V2336.3H802.8V2512ZM806.8 2512V2160.6H814.7V2512ZM818.6 2512V2160.6H826.6V2512ZM830.5 2512V2160.6H838.5V2512ZM842.4 2512V2336.3H850.4V2512ZM854.3 2512V2160.6H862.2V2512ZM866.2 2512V2160.6H874.1V2512ZM878 2512V2160.6H886V2512ZM889.9 2512V2336.3H897.9V2512ZM901.8 2512V2160.6H909.8V2512ZM913.7 2512V2160.6H921.6V2512ZM925.6 2512V2160.6H933.5V2512ZM937.4 2512V2336.3H945.4V2512ZM949.3 2512V2160.6H957.3V2512ZM961.2 2512V2160.6H969.2V2512ZM973.1 2512V2160.6H981V2512ZM985 2512V2336.3H992.9V2512ZM996.8 2512V2160.6H1004.8V2512ZM1008.7 2512V2160.6H1016.7V2512ZM1020.6 2512V2160.6H1028.6V2512ZM1032.5 2512V2336.3H1040.4V2512ZM1044.4 2512V2160.6H1052.3V2512ZM1056.2 2512V2160.6H1064.2V2512ZM1068.1 2512V2160.6H1076.1V2512ZM1080 2512V2336.3H1088V2512ZM1091.9 2512V2160.6H1099.8V2512ZM1103.8 2512V2160.6H1111.7V2512ZM1115.6 2512V2160.6H1123.6V2512ZM1127.5 2512V2336.3H1135.5V2512ZM1139.4 2512V2160.6H1147.4V2512ZM1151.3 2512V2160.6H1159.2V2512ZM1163.2 2512V2160.6H1171.1V2512ZM1175 2512V2336.3H1183V2512ZM1186.9 2512V2160.6H1194.9V2512ZM1198.8 2512V2160.6H1206.8V2512ZM1210.7 2512V2160.6H1218.6V2512ZM1222.6 2512V2336.3H1230.5V2512ZM1234.4 2512V2160.6H1242.4V2512ZM1246.3 2512V2160.6H1254.3V2512ZM1258.2 2512V2160.6H1266.2V2512ZM1270.1 2512V2336.3H1278V2512ZM1282 2512V2160.6H1289.9V2512ZM1293.8 2512V2160.6H1301.8V2512ZM1305.7 2512V2160.6H1313.7V2512ZM1317.6 2512V2336.3H1325.5V2512ZM1329.5 2512V2160.6H1337.4V2512ZM1341.4 2512V2160.6H1349.3V2512ZM1353.2 2512V2160.6H1361.2V2512ZM1365.1 2512V2336.3H1373.1V2512ZM1377 2512V2160.6H1385V2512ZM1388.9 2512V2160.6H1396.8V2512ZM1400.8 2512V2160.6H1408.7V2512ZM1412.6 2512V2336.3H1420.6V2512ZM1424.5 2512V2160.6H1432.5V2512ZM1436.4 2512V2160.6H1444.4V2512ZM1448.3 2512V2160.6H1456.2V2512ZM1460.2 2512V2336.3H1468.1V2512ZM1472 2512V2160.6H1480V2512ZM1483.9 2512V2160.6H1491.9V2512ZM1495.8 2512V2160.6H1503.8V2512ZM1507.7 2512V2336.3H1515.6V2512ZM1519.6 2512V2160.6H1527.5V2512ZM1531.4 2512V2160.6H1539.4V2512ZM1543.3 2512V2160.6H1551.3V2512Z" fill="#7EB26D"/>
<path d="M628.6 2512V2336.3H636.5V2512ZM640.4 2512V2160.6H648.4V2512ZM652.3 2512V2160.6H660.3V2512ZM664.2 2512V2160.6H672.2V2512ZM1424.5 2512V2336.3H1432.5V2512ZM1436.4 2512V2160.6H1444.4V2512ZM1448.3 2512V2160.6H1456.2V2512ZM1460.2 2512V2336.3H1468.1V2512Z" fill="#EAB839"/>
<text x="120" y="2154.2" text-anchor="end">2.5 opm</text>
<text x="120" y="2226.2" text-anchor="end">2.0 opm</text>
<text x="120" y="2300.2" text-anchor="end">1.5 opm</text>
<text x="120" y="2372.2" text-anchor="end">1.0 opm</text>
<text x="120" y="2446.2" text-anchor="end">0.5 opm</text>
<text x="120" y="2520.2" text-anchor="end">0 opm</text>
<text x="193" y="2546.3" text-anchor="middle">15:05</text>
<text x="431" y="2546.3" text-anchor="middle">15:10</text>
<text x="669" y="2546.3" text-anchor="middle">15:15</text>
<text x="905" y="2546.3" text-anchor="middle">15:20</text>
<text x="1143" y="2546.3" text-anchor="middle">15:25</text>
<text x="1381" y="2546.3" text-anchor="middle">15:30</text>
<path d="M1720 2147H3166M1720 2219H3166M1720 2293H3166M1720 2365H3166M1720 2439H3166M1720 2513H3166M1781 2146V2514M2023 2146V2514M2263 2146V2514M2505 2146V2514M2745 2146V2514M2987 2146V2514" stroke="#ebecec" stroke-width="2" fill="none"/>
<path d="M1720 2512V2248.5H1725.2V2512ZM1729.3 2512V2160.6H1737.3V2512ZM1741.3 2512V2160.6H1749.4V2512ZM1753.4 2512V2160.6H1761.4V2512ZM1765.4 2512V2160.6H1773.5V2512ZM1777.5 2512V2424.2H1785.5V2512ZM1789.5 2512V2160.6H1797.6V2512ZM1801.6 2512V2160.6H1809.6V2512ZM1813.7 2512V2160.6H1821.7V2512ZM1825.7 2512V2424.2H1833.8V2512ZM1837.8 2512V2160.6H1845.8V2512ZM1849.8 2512V2160.6H1857.9V2512ZM1861.9 2512V2160.6H1869.9V2512ZM1886 2512V2336.3H1894V2512ZM1898.1 2512V2160.6H1906.1V2512ZM1910.1 2512V2160.6H1918.2V2512ZM1922.2 2512V2336.3H1930.2V2512ZM1934.2 2512V2336.3H1942.3V2512ZM1946.3 2512V2160.6H1954.3V2512ZM1958.3 2512V2160.6H1966.4V2512ZM1970.4 2512V2336.3H1978.4V2512ZM1982.5 2512V2424.2H1990.5V2512ZM1994.5 2512V2160.6H2002.6V2512ZM2006.6 2512V2160.6H2014.6V2512ZM2018.6 2512V2248.5H2026.7V2512ZM2030.7 2512V2424.2H2038.7V2512ZM2042.7 2512V2160.6H2050.8V2512ZM2054.8 2512V2160.6H2062.8V2512ZM2066.9 2512V2248.5H2074.9V2512ZM2078.9 2512V2336.3H2086.9V2512ZM2091 2512V2160.6H2099V2512ZM2103 2512V2160.6H2111.1V2512ZM2115.1 2512V2160.6H2123.1V2512ZM2127.1 2512V2336.3H2135.2V2512ZM2139.2 2512V2248.5H2147.2V2512ZM2151.3 2512V2160.6H2159.3V2512ZM2163.3 2512V2160.6H2171.3V2512ZM2175.4 2512V2248.5H2183.4V2512ZM2187.4 2512V2336.3H2195.5V2512ZM2199.5 2512V2160.6H2207.5V2512ZM2211.5 2512V2160.6H2219.6V2512ZM2223.6 2512V2248.5H2231.6V2512ZM2235.7 2512V2336.3H2243.7V2512ZM2247.7 2512V2160.6H2255.7V2512ZM2259.8 2512V2160.6H2267.8V2512ZM2271.8 2512V2248.5H2279.9V2512ZM2283.9 2512V2336.3H2291.9V2512ZM2295.9 2512V2248.5H2304V2512ZM2308 2512V2160.6H2316V2512ZM2320.1 2512V2248.5H2328.1V2512ZM2332.1 2512V2248.5H2340.1V2512ZM2344.2 2512V2248.5H2352.2V2512ZM2356.2 2512V2160.6H2364.3V2512ZM2368.3 2512V2160.6H2376.3V2512ZM2380.3 2512V2336.3H2388.4V2512ZM2392.4 2512V2336.3H2400.4V2512ZM2404.4 2512V2160.6H2412.5V2512ZM2416.5 2512V2160.6H2424.5V2512ZM2428.6 2512V2248.5H2436.6V2512ZM2440.6 2512V2336.3H2448.7V2512ZM2452.7 2512V2160.6H2460.7V2512ZM2464.7 2512V2160.6H2472.8V2512ZM2476.8 2512V2248.5H2484.8V2512ZM2488.8 2512V2336.3H2496.9V2512ZM2500.9 2512V2160.6H2508.9V2512ZM2513 2512V2160.6H2521V2512ZM2525 2512V2248.5H2533.1V2512ZM2537.1 2512V2248.5H2545.1V2512ZM2549.1 2512V2160.6H2557.2V2512ZM2561.2 2512V2160.6H2569.2V2512ZM2573.2 2512V2336.3H2581.3V2512ZM2585.3 2512V2248.5H2593.3V2512ZM2597.4 2512V2160.6H2605.4V2512ZM2609.4 2512V2160.6H2617.5V2512ZM2621.5 2512V2336.3H2629.5V2512ZM2633.5 2512V2336.3H2641.6V2512ZM2645.6 2512V2160.6H2653.6V2512ZM2657.6 2512V2160.6H2665.7V2512ZM2669.7 2512V2248.5H2677.7V2512ZM2681.8 2512V2248.5H2689.8V2512ZM2693.8 2512V2160.6H2701.9V2512ZM2705.9 2512V2160.6H2713.9V2512ZM2717.9 2512V2248.5H2726V2512ZM2730 2512V2248.5H2738V2512ZM2742 2512V2248.5H2750.1V2512ZM2754.1 2512V2160.6H2762.1V2512ZM2766.2 2512V2248.5H2774.2V2512ZM2778.2 2512V2248.5H2786.3V2512ZM2790.3 2512V2248.5H2798.3V2512ZM2802.3 2512V2160.6H2810.4V2512ZM2814.4 2512V2248.5H2822.4V2512ZM2826.4 2512V2336.3H2834.5V2512ZM2838.5 2512V2248.5H2846.5V2512ZM2850.6 2512V2160.6H2858.6V2512ZM2862.6 2512V2160.6H2870.7V2512ZM2874.7 2512V2336.3H2882.7V2512ZM2886.7 2512V2336.3H2894.8V2512ZM2898.8 2512V2160.6H2906.8V2512ZM2910.8 2512V2160.6H2918.9V2512ZM2922.9 2512V2248.5H2930.9V2512ZM2935 2512V2336.3H2943V2512ZM2947 2512V2248.5H2955.1V2512ZM2959.1 2512V2160.6H2967.1V2512ZM2971.1 2512V2248.5H2979.2V2512ZM2983.2 2512V2248.5H2991.2V2512ZM2995.2 2512V2248.5H3003.3V2512ZM3007.3 2512V2160.6H3015.3V2512ZM3019.4 2512V2248.5H3027.4V2512ZM3031.4 2512V2248.5H3039.5V2512ZM3043.5 2512V2248.5H3051.5V2512ZM3055.5 2512V2160.6H3063.6V2512ZM3067.6 2512V2248.5H3075.6V2512ZM3079.6 2512V2248.5H3087.7V2512ZM3091.7 2512V2336.3H3099.7V2512ZM3103.8 2512V2160.6H3111.8V2512ZM3115.8 2512V2160.6H3123.9V2512ZM3127.9 2512V2248.5H3135.9V2512ZM3139.9 2512V2248.5H3148V2512ZM3152 2512V2160.6H3160V2512Z" fill="#7EB26D"/>
<text x="1709" y="2154.2" text-anchor="end">5 opm</text>
<text x="1709" y="2226.2" text-anchor="end">4 opm</text>
<text x="1709" y="2300.2" text-anchor="end">3 opm</text>
<text x="1709" y="2372.2" text-anchor="end">2 opm</text>
<text x="1709" y="2446.2" text-anchor="end">1 opm</text>
<text x="1709" y="2520.2" text-anchor="end">0 opm</text>
<text x="1781" y="2546.3" text-anchor="middle">15:05</text>
<text x="2023" y="2546.3" text-anchor="middle">15:10</text>
<text x="2263" y="2546.3" text-anchor="middle">15:15</text>
<text x="2505" y="2546.3" text-anchor="middle">15:20</text>
<text x="2745" y="2546.3" text-anchor="middle">15:25</text>
<text x="2987" y="2546.3" text-anchor="middle">15:30</text>
<g fill="none" stroke="#6b7078" stroke-width="1.9" stroke-linejoin="round" stroke-linecap="round"><path d="M394.24 31.80L394.24 32.12L394.22 32.44L394.19 32.76L394.14 33.08L394.05 33.39L393.88 33.68L393.53 33.94L392.91 34.12L392.15 34.24L391.53 34.35L391.17 34.52L390.96 34.71L390.82 34.92L390.71 35.14L390.61 35.37L390.52 35.59L390.44 35.83L390.39 36.08L390.40 36.36L390.55 36.74L390.90 37.25L391.36 37.88L391.67 38.44L391.73 38.87L391.65 39.20L391.49 39.48L391.30 39.74L391.09 39.99L390.88 40.23L390.66 40.46L390.43 40.68L390.19 40.89L389.94 41.10L389.68 41.29L389.40 41.45L389.07 41.53L388.64 41.47L388.08 41.16L387.45 40.70L386.94 40.35L386.56 40.20L386.28 40.19L386.03 40.24L385.79 40.32L385.57 40.41L385.34 40.51L385.12 40.62L384.91 40.76L384.72 40.97L384.55 41.33L384.44 41.95L384.32 42.71L384.14 43.33L383.88 43.68L383.59 43.85L383.28 43.94L382.96 43.99L382.64 44.02L382.32 44.04L382.00 44.04L381.68 44.04L381.36 44.02L381.04 43.99L380.72 43.94L380.41 43.85L380.12 43.68L379.86 43.33L379.68 42.71L379.56 41.95L379.45 41.33L379.28 40.97L379.09 40.76L378.88 40.62L378.66 40.51L378.43 40.41L378.21 40.32L377.97 40.24L377.72 40.19L377.44 40.20L377.06 40.35L376.55 40.70L375.92 41.16L375.36 41.47L374.93 41.53L374.60 41.45L374.32 41.29L374.06 41.10L373.81 40.89L373.57 40.68L373.34 40.46L373.12 40.23L372.91 39.99L372.70 39.74L372.51 39.48L372.35 39.20L372.27 38.87L372.33 38.44L372.64 37.88L373.10 37.25L373.45 36.74L373.60 36.36L373.61 36.08L373.56 35.83L373.48 35.59L373.39 35.37L373.29 35.14L373.18 34.92L373.04 34.71L372.83 34.52L372.47 34.35L371.85 34.24L371.09 34.12L370.47 33.94L370.12 33.68L369.95 33.39L369.86 33.08L369.81 32.76L369.78 32.44L369.76 32.12L369.76 31.80L369.76 31.48L369.78 31.16L369.81 30.84L369.86 30.52L369.95 30.21L370.12 29.92L370.47 29.66L371.09 29.48L371.85 29.36L372.47 29.25L372.83 29.08L373.04 28.89L373.18 28.68L373.29 28.46L373.39 28.23L373.48 28.01L373.56 27.77L373.61 27.52L373.60 27.24L373.45 26.86L373.10 26.35L372.64 25.72L372.33 25.16L372.27 24.73L372.35 24.40L372.51 24.12L372.70 23.86L372.91 23.61L373.12 23.37L373.34 23.14L373.57 22.92L373.81 22.71L374.06 22.50L374.32 22.31L374.60 22.15L374.93 22.07L375.36 22.13L375.92 22.44L376.55 22.90L377.06 23.25L377.44 23.40L377.72 23.41L377.97 23.36L378.21 23.28L378.43 23.19L378.66 23.09L378.88 22.98L379.09 22.84L379.28 22.63L379.45 22.27L379.56 21.65L379.68 20.89L379.86 20.27L380.12 19.92L380.41 19.75L380.72 19.66L381.04 19.61L381.36 19.58L381.68 19.56L382.00 19.56L382.32 19.56L382.64 19.58L382.96 19.61L383.28 19.66L383.59 19.75L383.88 19.92L384.14 20.27L384.32 20.89L384.44 21.65L384.55 22.27L384.72 22.63L384.91 22.84L385.12 22.98L385.34 23.09L385.57 23.19L385.79 23.28L386.03 23.36L386.28 23.41L386.56 23.40L386.94 23.25L387.45 22.90L388.08 22.44L388.64 22.13L389.07 22.07L389.40 22.15L389.68 22.31L389.94 22.50L390.19 22.71L390.43 22.92L390.66 23.14L390.88 23.37L391.09 23.61L391.30 23.86L391.49 24.12L391.65 24.40L391.73 24.73L391.67 25.16L391.36 25.72L390.90 26.35L390.55 26.86L390.40 27.24L390.39 27.52L390.44 27.77L390.52 28.01L390.61 28.23L390.71 28.46L390.82 28.68L390.96 28.89L391.17 29.08L391.53 29.25L392.15 29.36L392.91 29.48L393.53 29.66L393.88 29.92L394.05 30.21L394.14 30.52L394.19 30.84L394.22 31.16L394.24 31.48Z"/><circle cx="382.0" cy="31.8" r="4.1"/>
<path d="M434.8 25.1H457.2M441.9 25V22.6a2.7 2.7 0 0 1 2.7-2.7h3.8a2.7 2.7 0 0 1 2.7 2.7V25M438 25.4V41.4a2.5 2.5 0 0 0 2.5 2.5H451.9a2.5 2.5 0 0 0 2.5-2.5V25.4"/><path d="M443.5 30.7V38.5M448.6 30.7V38.5" stroke-width="2.4"/></g>
</svg>
<div class="lh" style="left:43.6px;width:1536.4px;top:1191px"><span style="right:350.5px">avg</span><span style="right:198.7px">current</span><span style="right:20px">total</span></div>
<div class="lg" style="left:43.6px;width:1536.4px;top:1235.8999999999999px"><span class="ic" style="left:25.9px;background:#7EB26D"></span><span class="lb" style="left:66.7px">successful reconciliations</span><span style="right:350.5px">2.12 opm</span><span style="right:198.7px">1.20 opm</span><span style="right:20px">256.80 opm</span></div>
<div class="lg stripe" style="left:43.6px;width:1536.4px;top:1285.8999999999999px"><span class="ic" style="left:25.9px;background:#EAB839"></span><span class="lb" style="left:66.7px">failed reconciliations</span><span style="right:350.5px">0.06 opm</span><span style="right:198.7px">0 opm</span><span style="right:20px">7.20 opm</span></div>
<div class="lh" style="left:1651.6px;width:1536.4px;top:1241px"><span style="right:350.5px">avg</span><span style="right:198.7px">current</span><span style="right:20px">total</span></div>
<div class="lg" style="left:1651.6px;width:1536.4px;top:1285.8999999999999px"><span class="ic" style="left:25.9px;background:#7EB26D"></span><span class="lb" style="left:66.7px">successful git pulls</span><span style="right:350.5px">2.87 opm</span><span style="right:198.7px">2.40 opm</span><span style="right:20px">346.80 opm</span></div>
<div class="lh" style="left:43.6px;width:1536.4px;top:2559px"><span style="right:350.5px">avg</span><span style="right:198.7px">current</span><span style="right:20px">total</span></div>
<div class="lg" style="left:43.6px;width:1536.4px;top:2603.9px"><span class="ic" style="left:25.9px;background:#7EB26D"></span><span class="lb" style="left:66.7px">successful reconciliations</span><span style="right:350.5px">2.10 opm</span><span style="right:198.7px">2.40 opm</span><span style="right:20px">254.40 opm</span></div>
<div class="lg stripe" style="left:43.6px;width:1536.4px;top:2653.9px"><span class="ic" style="left:25.9px;background:#EAB839"></span><span class="lb" style="left:66.7px">failed reconciliations</span><span style="right:350.5px">0.13 opm</span><span style="right:198.7px">0 opm</span><span style="right:20px">15.60 opm</span></div>
<div class="lh" style="left:1651.6px;width:1536.4px;top:2559px"><span style="right:350.5px">avg</span><span style="right:198.7px">current</span><span style="right:20px">total</span></div>
<div class="lg" style="left:1651.6px;width:1536.4px;top:2603.9px"><span class="ic" style="left:25.9px;background:#7EB26D"></span><span class="lb" style="left:66.7px">successful chart pulls</span><span style="right:350.5px">3.85 opm</span><span style="right:198.7px">4.80 opm</span><span style="right:20px">465.60 opm</span></div>
<div class="lg stripe" style="left:1651.6px;width:1536.4px;top:2653.9px"><span class="ic" style="left:25.9px;background:#EAB839"></span><span class="lb" style="left:66.7px">failed chart pulls</span><span style="right:350.5px">0 opm</span><span style="right:198.7px">0 opm</span><span style="right:20px">0 opm</span></div>
</div></body></html>
